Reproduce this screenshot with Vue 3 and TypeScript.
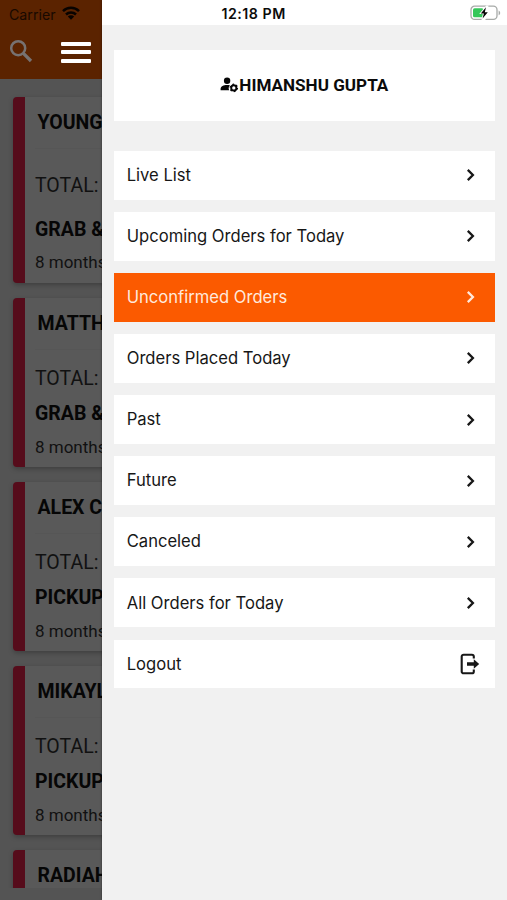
<script setup lang="ts">
interface Order {
  name: string
  type: string
  age: string
  tall?: boolean
}

interface MenuItem {
  label: string
  icon: 'chevron' | 'logout'
  active?: boolean
}

const orders: Order[] = [
  { name: 'YOUNG', type: 'GRAB &', age: '8 months', tall: true },
  { name: 'MATTH', type: 'GRAB &', age: '8 months' },
  { name: 'ALEX C', type: 'PICKUP', age: '8 months' },
  { name: 'MIKAYL', type: 'PICKUP', age: '8 months' },
  { name: 'RADIAH', type: '', age: '' },
]

const menu: MenuItem[] = [
  { label: 'Live List', icon: 'chevron' },
  { label: 'Upcoming Orders for Today', icon: 'chevron' },
  { label: 'Unconfirmed Orders', icon: 'chevron', active: true },
  { label: 'Orders Placed Today', icon: 'chevron' },
  { label: 'Past', icon: 'chevron' },
  { label: 'Future', icon: 'chevron' },
  { label: 'Canceled', icon: 'chevron' },
  { label: 'All Orders for Today', icon: 'chevron' },
  { label: 'Logout', icon: 'logout' },
]
</script>

<template>
  <div class="screen">
    <section class="behind">
      <header class="topbar">
        <div class="carrier">
          <span>Carrier</span>
          <svg class="wifi" width="18" height="14" viewBox="0 0 18 14" fill="none" stroke="#080300" stroke-width="2.5">
            <path d="M1 5.1a11.4 11.4 0 0 1 16 0" />
            <path d="M4 8.5a7.2 7.2 0 0 1 10 0" />
            <path d="M9 13.8 5.8 10.6a4.5 4.5 0 0 1 6.4 0z" fill="#080300" stroke="none" />
          </svg>
        </div>
        <div class="tools">
          <svg class="search" width="24" height="24" viewBox="0 0 24 24" fill="none" stroke="#777271">
            <circle cx="9.2" cy="9.2" r="7" stroke-width="2.5" />
            <path d="M14.4 14.4 22 22" stroke-width="3.3" />
          </svg>
          <div class="burger"><i></i><i></i><i></i></div>
        </div>
      </header>
      <div class="list">
        <article v-for="o in orders" :key="o.name" class="card" :class="{ tall: o.tall }">
          <h2 class="name">{{ o.name }}</h2>
          <template v-if="o.type">
            <p class="total">TOTAL:</p>
            <p class="type">{{ o.type }}</p>
            <p class="age">{{ o.age }}</p>
          </template>
        </article>
      </div>
    </section>

    <aside class="drawer">
      <div class="status">
        <span class="time">12:18 PM</span>
        <svg class="battery" width="31" height="16" viewBox="0 0 31 16">
          <rect x="1" y="1.2" width="26" height="13.2" rx="3.6" fill="#fff" stroke="#a7aaa8" stroke-width="1.3" />
          <path d="M28.6 5.4c2.1.8 2.1 4 0 4.9z" fill="#a7aaa8" />
          <rect x="3" y="3.3" width="10.5" height="9" rx="1.6" fill="#34c759" />
          <path d="M16.2.4 9.2 9h3.6l-1.4 6.4h3.4L21 6.6h-4L18.6.4z" fill="#fff" />
          <path d="M16 2.2 10.8 8.4h3.1L12.6 13.6 17.8 7.2h-3z" fill="#050505" />
        </svg>
      </div>
      <div class="body">
        <div class="profile">
          <svg class="user" width="19" height="16" viewBox="0 0 19 16">
            <circle cx="7.1" cy="3.8" r="3.2" fill="#060606" />
            <path d="M.6 13.3v-1.6c0-2.3 3-3.7 6.4-3.7 1.2 0 2.1.1 3 .4-1.5 1.4-1.7 3.2-.8 4.9z" fill="#060606" />
            <circle cx="13.8" cy="10.9" r="2.6" fill="none" stroke="#060606" stroke-width="1.9" />
            <circle cx="13.8" cy="10.9" r="3.7" fill="none" stroke="#060606" stroke-width="1.2" stroke-dasharray="1.75 2.125" />
          </svg>
          <span>HIMANSHU GUPTA</span>
        </div>
        <nav class="menu">
          <a v-for="m in menu" :key="m.label" class="item" :class="{ active: m.active }">
            <span>{{ m.label }}</span>
            <svg v-if="m.icon === 'chevron'" class="chevron" width="9" height="14" viewBox="0 0 9 14" fill="none" stroke="currentColor" stroke-width="2.3">
              <path d="M1.8 1.9 6.9 7l-5.1 5.1" />
            </svg>
            <svg v-else class="logout" width="20" height="22" viewBox="0 0 20 22" fill="none" stroke="currentColor" stroke-width="2.1">
              <path d="M13.8 5.5V3.6A1.9 1.9 0 0 0 11.9 1.7H3.6a1.9 1.9 0 0 0-1.9 1.9v14.8a1.9 1.9 0 0 0 1.9 1.9h8.3a1.9 1.9 0 0 0 1.9-1.9v-1.9" />
              <path d="M7 9.2h6.8V6.2L19.2 11l-5.4 4.8v-3H7z" fill="currentColor" stroke="none" />
            </svg>
          </a>
        </nav>
      </div>
    </aside>
  </div>
</template>

<style>
body {
  margin: 0;
  background: #f1f1f1;
}
</style>

<style scoped>
.screen {
  display: flex;
  width: 507px;
  height: 900px;
  overflow: hidden;
  font-family: Inter, "Liberation Sans", sans-serif;
}

.behind {
  display: flex;
  flex-direction: column;
  flex: none;
  width: 102px;
  height: 888px;
  padding-bottom: 12px;
  overflow: hidden;
  background: #545454;
}

.topbar {
  flex: none;
  box-sizing: border-box;
  height: 79px;
  padding: 4px 0 0 9px;
  background: #5b2300;
}

.carrier {
  display: flex;
  align-items: center;
  gap: 6px;
  height: 20px;
  font-size: 14.2px;
  color: #180900;
}

.wifi {
  margin-top: -3px;
}

.tools {
  display: flex;
  align-items: flex-start;
  padding-top: 15px;
}

.burger {
  display: flex;
  flex-direction: column;
  gap: 4.3px;
  width: 30px;
  margin: 3px 0 0 28px;
}

.burger i {
  height: 4px;
  border-radius: 1px;
  background: #fff;
}

.list {
  flex: 1;
  min-height: 0;
  overflow: hidden;
  padding: 17.6px 0 0 13px;
  font-family: Roboto, sans-serif;
  color: #060606;
}

.card {
  box-sizing: border-box;
  width: 480px;
  height: 169px;
  margin-bottom: 15px;
  padding-left: 10px;
  border-left: 12.5px solid #560c1b;
  border-radius: 4px;
  background: #595959;
  box-shadow: 0 2px 5px rgba(0, 0, 0, 0.25);
  white-space: nowrap;
}

.card.tall {
  height: 186px;
}

.name,
.total,
.type,
.age {
  margin: 0;
  font-weight: 400;
}

.name {
  height: 52px;
  padding-left: 2.5px;
  border-bottom: 1px solid #565656;
  box-sizing: border-box;
  font-size: 19.5px;
  font-weight: 700;
  line-height: 52px;
}

.total {
  margin-top: 17px;
  font-size: 19.5px;
  line-height: 24px;
  color: #111;
}

.type {
  margin-top: 11px;
  font-size: 19.5px;
  font-weight: 700;
  line-height: 24px;
}

.age {
  margin-top: 11.3px;
  font-size: 17px;
  line-height: 20px;
  color: #111;
}

.tall .total {
  margin-top: 25px;
}

.tall .type {
  margin-top: 20px;
}

.tall .age {
  margin-top: 10.5px;
}

.drawer {
  flex: 1;
  min-width: 0;
  background: #f1f1f1;
  box-shadow: 0 0 2px rgba(0, 0, 0, 0.5);
}

.status {
  display: flex;
  align-items: center;
  justify-content: space-between;
  box-sizing: border-box;
  height: 25.4px;
  padding: 1px 6px 0 119.5px;
  background: #fff;
  color: #0b0b0b;
}

.time {
  font-size: 14.2px;
  font-weight: 600;
  letter-spacing: 0.5px;
}

.body {
  padding: 24.3px 12.3px 0 12px;
}

.profile {
  display: flex;
  align-items: center;
  justify-content: center;
  height: 70.9px;
  background: #fff;
  color: #0b0b0b;
  font-family: Roboto, sans-serif;
  font-size: 17.1px;
  font-weight: 700;
}

.user {
  margin-top: -1px;
}

.menu {
  display: flex;
  flex-direction: column;
  gap: 12.3px;
  margin-top: 30.2px;
}

.item {
  display: flex;
  align-items: center;
  justify-content: space-between;
  box-sizing: border-box;
  height: 48.8px;
  padding: 0 15px 0 12.7px;
  background: #fff;
  color: #171717;
  font-size: 16.6px;
}

.item span {
  margin-top: -0.5px;
}

.item.active {
  background: #fb5a00;
  color: #ffe9dc;
}

.chevron {
  margin-right: 4.5px;
}
</style>
